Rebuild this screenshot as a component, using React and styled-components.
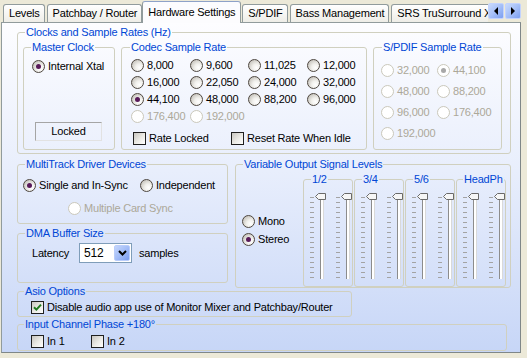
import React from "react";
import styled, { createGlobalStyle } from "styled-components";

const tabs = ["Levels", "Patchbay / Router", "Hardware Settings", "S/PDIF", "Bass Management", "SRS TruSurround XT"];
const codecRates = [
  ["8,000"], ["9,600"], ["11,025"], ["12,000"],
  ["16,000"], ["22,050"], ["24,000"], ["32,000"],
  ["44,100", true], ["48,000"], ["88,200"], ["96,000"],
  ["176,400", false, true], ["192,000", false, true],
];
const spdifRates = [
  ["32,000"], ["44,100", true], ["48,000"], ["88,200"],
  ["96,000"], ["176,400"], ["192,000"],
];
const outputs = ["1/2", "3/4", "5/6", "HeadPh"];
const ticks = Array.from({ length: 17 }, (_, i) => 4 + i * 5);

const Radio = ({ label, checked, disabled }) => (
  <Choice $disabled={disabled}>
    <RadioDot $checked={checked} $disabled={disabled} />
    {label}
  </Choice>
);

const Check = ({ label, checked }) => (
  <Choice>
    <CheckBox>
      {checked && (
        <svg width="9" height="9" viewBox="0 0 9 9">
          <path d="M1 4.2 L3.4 6.6 L8 1.6" fill="none" stroke="#1f7a1f" strokeWidth="2" />
        </svg>
      )}
    </CheckBox>
    {label}
  </Choice>
);

const Fader = () => (
  <svg width="16" height="86" viewBox="0 0 16 86">
    {ticks.map((y) => (
      <rect key={y} x="0" y={y} width="4" height="1" fill="#a3a3a3" />
    ))}
    <rect x="10" y="2" width="4" height="84" fill="#ffffff" />
    <rect x="10" y="2" width="1" height="84" fill="#8c8c8c" />
    <rect x="13" y="2" width="1" height="84" fill="#d9d9d9" />
    <polygon points="5.5,3.5 8.5,0.5 15.5,0.5 15.5,6.5 8.5,6.5" fill="#f6f6f6" stroke="#6a6a6a" />
  </svg>
);

const Arrow = ({ dir }) => (
  <ArrowButton>
    <svg width="6" height="8" viewBox="0 0 6 8">
      <path d={dir === "left" ? "M5 0 L1 4 L5 8 Z" : "M1 0 L5 4 L1 8 Z"} fill="#000" />
    </svg>
  </ArrowButton>
);

const App = () => {
  return (
    <>
      <GlobalStyle />
      <Window>
        <TabStrip>
          <TabList>
            {tabs.map((t) => (
              <Tab key={t} $active={t === "Hardware Settings"}>{t}</Tab>
            ))}
          </TabList>
          <Arrows>
            <Arrow dir="left" />
            <Arrow dir="right" />
          </Arrows>
        </TabStrip>

        <Panel>
          <Group $w={494} $h={128}>
            <Caption>Clocks and Sample Rates (Hz)</Caption>
            <ClockRow>
              <Group $w={92} $h={109}>
                <Caption>Master Clock</Caption>
                <MasterBody>
                  <Radio label="Internal Xtal" checked />
                  <Status>Locked</Status>
                </MasterBody>
              </Group>

              <Group $w={246} $h={109}>
                <Caption $left={8}>Codec Sample Rate</Caption>
                <CodecGrid>
                  {codecRates.map(([r, c, d]) => (
                    <Radio key={r} label={r} checked={c} disabled={d} />
                  ))}
                </CodecGrid>
                <CheckRow>
                  <Check label="Rate Locked" />
                  <Check label="Reset Rate When Idle" />
                </CheckRow>
              </Group>

              <Group $w={129} $h={109}>
                <Caption $left={8}>S/PDIF Sample Rate</Caption>
                <SpdifGrid>
                  {spdifRates.map(([r, c]) => (
                    <Radio key={r} label={r} checked={c} disabled />
                  ))}
                </SpdifGrid>
              </Group>
            </ClockRow>
          </Group>

          <MiddleRow>
            <LeftColumn>
              <Group $w={211} $h={66}>
                <Caption>MultiTrack Driver Devices</Caption>
                <DeviceBody>
                  <DeviceRow>
                    <Radio label="Single and In-Sync" checked />
                    <Radio label="Independent" />
                  </DeviceRow>
                  <CardSync>
                    <Radio label="Multiple Card Sync" disabled />
                  </CardSync>
                </DeviceBody>
              </Group>

              <Group $w={211} $h={56}>
                <Caption>DMA Buffer Size</Caption>
                <LatencyRow>
                  <LatencyLabel>Latency</LatencyLabel>
                  <Combo>
                    <ComboValue>512</ComboValue>
                    <ComboButton>
                      <svg width="9" height="6" viewBox="0 0 9 6">
                        <path d="M1 1 L4.5 4.5 L8 1" fill="none" stroke="#000" strokeWidth="2" />
                      </svg>
                    </ComboButton>
                  </Combo>
                  <span>samples</span>
                </LatencyRow>
              </Group>
            </LeftColumn>

            <Group $w={276} $h={130} $pb={0}>
              <Caption>Variable Output Signal Levels</Caption>
              <OutputBody>
                <ModeColumn>
                  <Radio label="Mono" />
                  <Radio label="Stereo" checked />
                </ModeColumn>
                <FaderGroups>
                  {outputs.map((o) => (
                    <Group key={o} $w={50} $h={114} $pb={0}>
                      <Caption $left={o === "HeadPh" ? 6 : 7}>{o}</Caption>
                      <FaderPair>
                        <Fader />
                        <Fader />
                      </FaderPair>
                    </Group>
                  ))}
                </FaderGroups>
              </OutputBody>
            </Group>
          </MiddleRow>

          <AsioGroup $w={335} $h={32}>
            <Caption $left={6}>Asio Options</Caption>
            <OptionRow $top={3}>
              <Check label="Disable audio app use of Monitor Mixer and Patchbay/Router" checked />
            </OptionRow>
          </AsioGroup>

          <PhaseGroup $w={490} $h={33}>
            <Caption $left={6}>Input Channel Phase +180°</Caption>
            <OptionRow $top={4}>
              <PhaseItem><Check label="In 1" /></PhaseItem>
              <PhaseItem><Check label="In 2" /></PhaseItem>
            </OptionRow>
          </PhaseGroup>
        </Panel>
      </Window>
    </>
  );
};

// Styled Components
const GlobalStyle = createGlobalStyle`
  * { box-sizing: border-box; }
  body {
    margin: 0;
    background: #ece9d8;
    font-family: "Liberation Sans", Arial, sans-serif;
    font-size: 11px;
    letter-spacing: -0.2px;
    color: #000;
  }
`;

const Window = styled.div`
  width: 527px;
  height: 358px;
  padding-top: 1px;
  display: flex;
  flex-direction: column;
  overflow: hidden;
`;

const TabStrip = styled.div`
  display: flex;
  height: 21px;
  padding-left: 3px;
  position: relative;
  z-index: 1;
`;

const TabList = styled.div`
  display: flex;
  align-items: flex-start;
  width: 485px;
  height: 22px;
  overflow: hidden;
`;

const Tab = styled.div`
  flex: none;
  height: ${(p) => (p.$active ? 22 : 18)}px;
  margin: ${(p) => (p.$active ? "0 1px 0 -2px" : "3px 2px 0 0")};
  padding: ${(p) => (p.$active ? "4px 5px 0" : "2px 4px 0 5px")};
  border: 1px solid #919b9c;
  border-bottom: none;
  border-top-color: ${(p) => (p.$active ? "#8ea2c8" : "#919b9c")};
  border-radius: 3px 3px 0 0;
  background: ${(p) => (p.$active ? "#fcfcfe" : "linear-gradient(#ffffff, #eeede7)")};
  line-height: 13px;
  white-space: nowrap;
`;

const Arrows = styled.div`
  display: flex;
  gap: 1px;
  margin-top: 2px;
  height: 16px;
`;

const ArrowButton = styled.div`
  width: 16px;
  height: 16px;
  display: flex;
  align-items: center;
  justify-content: center;
  border: 1px solid #c3d3fd;
  border-radius: 2px;
  background: linear-gradient(135deg, #c9dafc 0%, #a6c0f8 50%, #7c9ff0 100%);
`;

const Panel = styled.div`
  width: 520px;
  height: 331px;
  margin-left: 1px;
  padding: 3px 9px 0 15px;
  border: 1px solid #919b9c;
  border-right-color: #7f8788;
  border-bottom-color: #7f8788;
  background: linear-gradient(#fdfdff 0%, #e8eefc 45%, #c7d6f7 100%);
`;

const Group = styled.fieldset`
  width: ${(p) => p.$w}px;
  height: ${(p) => p.$h}px;
  margin: 0;
  padding: 0 0 ${(p) => (p.$pb === undefined ? 2 : p.$pb)}px;
  min-width: 0;
  flex: none;
  border: 1px solid #d0d0bf;
  border-radius: 3px;
`;

const Caption = styled.legend`
  margin-left: ${(p) => p.$left || 7}px;
  padding: 0 1px;
  line-height: 13px;
  color: #0046d5;
  white-space: nowrap;
`;

const ClockRow = styled.div`
  display: flex;
  gap: 6px;
  padding-left: 5px;
  margin-top: 2px;
`;

const MasterBody = styled.div`
  display: flex;
  flex-direction: column;
  justify-content: space-between;
  height: 91px;
  padding: 6px 0 4px 8px;
`;

const Status = styled.div`
  width: 67px;
  height: 19px;
  margin-left: 3px;
  border: 1px solid #a5a5a5;
  border-right-color: #e2e2e2;
  border-bottom-color: #e2e2e2;
  line-height: 17px;
  text-align: center;
`;

const Choice = styled.label`
  display: flex;
  align-items: center;
  gap: 3px;
  height: 13px;
  line-height: 13px;
  white-space: nowrap;
  color: ${(p) => (p.$disabled ? "#aca899" : "#000")};
`;

const RadioDot = styled.span`
  flex: none;
  width: 13px;
  height: 13px;
  display: flex;
  align-items: center;
  justify-content: center;
  border-radius: 50%;
  border: 1px solid ${(p) => (p.$disabled ? "#cac8bb" : "#4e4740")};
  background: ${(p) =>
    p.$disabled
      ? "#ffffff"
      : "radial-gradient(circle at 68% 70%, #ffffff 0%, #f1f0ec 35%, #b4b0a8 100%)"};

  &::after {
    content: "";
    display: ${(p) => (p.$checked ? "block" : "none")};
    width: 5px;
    height: 5px;
    border-radius: 50%;
    background: ${(p) => (p.$disabled ? "#a8a8a8" : "#581a5a")};
  }
`;

const CheckBox = styled.span`
  flex: none;
  width: 13px;
  height: 13px;
  display: flex;
  align-items: center;
  justify-content: center;
  border: 1px solid #1f1f1f;
  background: linear-gradient(135deg, #c8c6c0 0%, #ecebe6 55%, #ffffff 100%);
`;

const CodecGrid = styled.div`
  display: grid;
  grid-template-columns: 59px 58px 59px auto;
  grid-auto-rows: 17px;
  align-items: center;
  padding-left: 9px;
  margin-top: 3px;
`;

const CheckRow = styled.div`
  display: grid;
  grid-template-columns: 98px auto;
  align-items: center;
  height: 17px;
  margin-top: 5px;
  padding-left: 11px;
`;

const SpdifGrid = styled.div`
  display: grid;
  grid-template-columns: 56px auto;
  grid-auto-rows: 21px;
  align-items: center;
  padding-left: 7px;
  margin-top: 6px;
`;

const MiddleRow = styled.div`
  display: flex;
  gap: 7px;
  margin-top: 4px;
`;

const LeftColumn = styled.div`
  display: flex;
  flex-direction: column;
  gap: 3px;
`;

const DeviceBody = styled.div`
  padding: 8px 0 0 5px;
`;

const DeviceRow = styled.div`
  display: grid;
  grid-template-columns: 117px auto;
`;

const CardSync = styled.div`
  margin: 10px 0 0 45px;
`;

const LatencyRow = styled.div`
  display: flex;
  align-items: center;
  gap: 7px;
  padding: 3px 0 0 14px;
`;

const LatencyLabel = styled.span`
  width: 40px;
`;

const Combo = styled.div`
  display: flex;
  width: 53px;
  height: 20px;
  padding: 1px;
  border: 1px solid #7f9db9;
  background: #ffffff;
`;

const ComboValue = styled.span`
  flex: 1;
  padding-left: 3px;
  line-height: 16px;
  font-size: 12px;
`;

const ComboButton = styled.span`
  width: 16px;
  display: flex;
  align-items: center;
  justify-content: center;
  border: 1px solid #b9cdfb;
  border-radius: 2px;
  background: linear-gradient(135deg, #c5d6fc 0%, #a3bdf7 50%, #7a9cf0 100%);
`;

const OutputBody = styled.div`
  display: flex;
  align-items: center;
  padding-left: 6px;
  margin-top: 2px;
`;

const ModeColumn = styled.div`
  display: flex;
  flex-direction: column;
  gap: 5px;
  width: 61px;
`;

const FaderGroups = styled.div`
  display: flex;
  gap: 1px;
`;

const FaderPair = styled.div`
  display: flex;
  gap: 10px;
  padding: 7px 0 0 6px;
`;

const AsioGroup = styled(Group)`
  margin-top: -3px;
`;

const PhaseGroup = styled(Group)`
  margin-top: 1px;
`;

const OptionRow = styled.div`
  display: flex;
  padding: ${(p) => p.$top}px 0 0 13px;
`;

const PhaseItem = styled.div`
  width: 60px;
`;

export default App;
